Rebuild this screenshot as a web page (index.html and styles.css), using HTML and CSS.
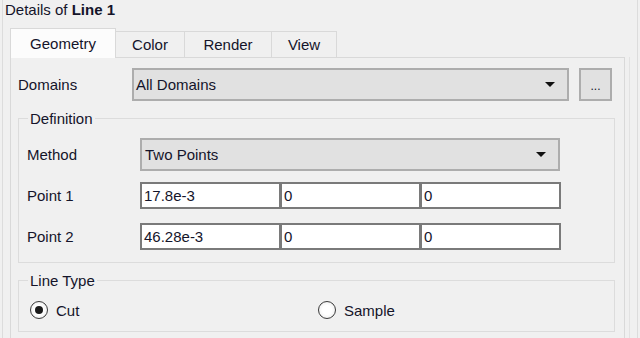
FILE: index.html
```html
<!DOCTYPE html>
<html lang="en">
<head>
    <meta charset="UTF-8">
    <title>Details of Line 1</title>
    <link rel="stylesheet" href="styles.css">
</head>
<body>

    <div class="window">
        <div class="title">Details of <b>Line 1</b></div>

        <div class="tabs">
            <div class="tab active tab-geometry">Geometry</div>
            <div class="tab tab-color">Color</div>
            <div class="tab tab-render">Render</div>
            <div class="tab tab-view">View</div>
        </div>

        <div class="panel">
            <div class="domains-row">
                <span class="domains-label">Domains</span>
                <div class="select select-domains">All Domains<span class="arrow"></span></div>
                <div class="more-btn">...</div>
            </div>

            <fieldset class="group">
                <legend>Definition</legend>
                <div class="field-row">
                    <span class="field-label">Method</span>
                    <div class="select select-method">Two Points<span class="arrow"></span></div>
                </div>
                <div class="field-row">
                    <span class="field-label">Point 1</span>
                    <div class="inputs">
                        <div class="text-input">17.8e-3</div>
                        <div class="text-input">0</div>
                        <div class="text-input">0</div>
                    </div>
                </div>
                <div class="field-row">
                    <span class="field-label">Point 2</span>
                    <div class="inputs">
                        <div class="text-input">46.28e-3</div>
                        <div class="text-input">0</div>
                        <div class="text-input">0</div>
                    </div>
                </div>
            </fieldset>

            <fieldset class="group group-type">
                <legend>Line Type</legend>
                <div class="radios">
                    <div class="radio radio-cut"><span class="circle checked"></span>Cut</div>
                    <div class="radio"><span class="circle"></span>Sample</div>
                </div>
            </fieldset>
        </div>
    </div>

</body>
</html>
```

FILE: styles.css
```css
body {
    margin: 0;
    background-color: #f0f0f0;
    font-family: 'Liberation Sans', Arial, sans-serif;
    font-size: 15px;
    color: #14142a;
    overflow: hidden;
}
.window {
    margin-left: 2px;
    width: 636px;
    height: 338px;
    box-sizing: border-box;
    border-left: 1px solid #dcdcdc;
    border-right: 1px solid #dcdcdc;
}
.title {
    height: 20px;
    line-height: 20px;
    padding-left: 2px;
}
.tabs {
    display: flex;
    align-items: flex-start;
    height: 29px;
    margin-top: 8px;
    margin-left: 7px;
    position: relative;
    z-index: 1;
}
.tab {
    box-sizing: border-box;
    height: 26px;
    margin-top: 3px;
    margin-left: -1px;
    border: 1px solid #d9d9d9;
    border-bottom: none;
    background-color: #f0f0f0;
    text-align: center;
    line-height: 26px;
}
.tab.active {
    height: 30px;
    margin-top: 0;
    margin-left: 0;
    background-color: #fcfcfc;
    line-height: 29px;
}
.tab-geometry { width: 106px; }
.tab-color { width: 70px; }
.tab-render { width: 88px; }
.tab-view { width: 66px; }
.panel {
    margin-left: 7px;
    width: 615px;
    height: 290px;
    box-sizing: border-box;
    border: 1px solid #d9d9d9;
    box-shadow: 4px 0 0 #f0f0f0, 5px 0 0 #e2e2e2;
    padding: 10px 0 0 7px;
}
.domains-row {
    display: flex;
    align-items: center;
    height: 33px;
}
.domains-label {
    width: 114px;
}
.select {
    display: flex;
    align-items: center;
    justify-content: space-between;
    box-sizing: border-box;
    height: 33px;
    padding: 0 12px 0 3px;
    background-color: #e1e1e1;
    border: 2px solid #adadad;
}
.select-domains { width: 437px; padding-left: 2px; }
.select-method { width: 420px; }
.arrow {
    width: 0;
    height: 0;
    border-left: 5px solid transparent;
    border-right: 5px solid transparent;
    border-top: 5px solid #111;
}
.more-btn {
    box-sizing: border-box;
    width: 33px;
    height: 33px;
    margin-left: 10px;
    background-color: #e1e1e1;
    border: 2px solid #adadad;
    text-align: center;
    line-height: 33px;
    font-size: 12px;
}
.group {
    width: 597px;
    box-sizing: border-box;
    margin: 10px 0 0 0;
    padding: 8px 8px 5px 8px;
    border: 1px solid #dcdcdc;
}
.group legend {
    padding: 0 2px;
    margin-left: 1px;
    line-height: 15px;
}
.field-row {
    display: flex;
    align-items: center;
    height: 41px;
}
.field-label {
    width: 113px;
}
.inputs {
    display: flex;
}
.text-input {
    box-sizing: border-box;
    width: 141px;
    height: 27px;
    margin-left: -1px;
    padding-left: 2px;
    background-color: #fff;
    border: 2px solid #7a7a7a;
    line-height: 23px;
}
.inputs .text-input:first-child {
    margin-left: 0;
}
.group-type {
    padding-top: 7px;
    padding-bottom: 6px;
}
.radios {
    display: flex;
    align-items: center;
    height: 30px;
}
.radio {
    display: flex;
    align-items: center;
    gap: 8px;
}
.radio-cut {
    width: 288px;
    margin-left: 3px;
}
.circle {
    width: 16px;
    height: 16px;
    border: 1px solid #3a3a3a;
    border-radius: 50%;
    background: radial-gradient(circle, #ffffff 40%, #e6e6e6 100%);
    display: flex;
    align-items: center;
    justify-content: center;
}
.circle.checked::after {
    content: "";
    width: 8px;
    height: 8px;
    border-radius: 50%;
    background-color: #1a1a1a;
}
```
